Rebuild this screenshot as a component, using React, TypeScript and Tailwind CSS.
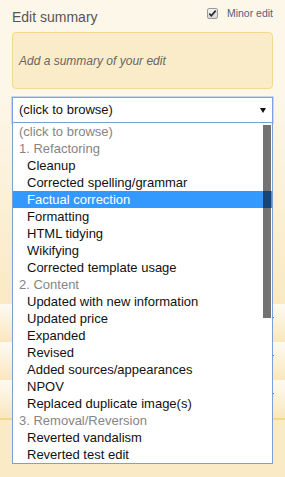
import { Fragment } from "react";

type Row = { label: string; group?: boolean; selected?: boolean };

const rows: Row[] = [
  { label: "(click to browse)", group: true },
  { label: "1. Refactoring", group: true },
  { label: "Cleanup" },
  { label: "Corrected spelling/grammar" },
  { label: "Factual correction", selected: true },
  { label: "Formatting" },
  { label: "HTML tidying" },
  { label: "Wikifying" },
  { label: "Corrected template usage" },
  { label: "2. Content", group: true },
  { label: "Updated with new information" },
  { label: "Updated price" },
  { label: "Expanded" },
  { label: "Revised" },
  { label: "Added sources/appearances" },
  { label: "NPOV" },
  { label: "Replaced duplicate image(s)" },
  { label: "3. Removal/Reversion", group: true },
  { label: "Reverted vandalism" },
  { label: "Reverted test edit" },
];

const App = () => {
  return (
    <div className="flex h-[477px] w-[285px] flex-col overflow-hidden font-['Liberation_Sans',Arial,sans-serif]">
      <div className="h-[304px] shrink-0 bg-gradient-to-b from-[#fdf7ea] from-30% to-[#fae9c3] px-3 pt-[5px]">
        <div className="flex items-start justify-between">
          <span className="mt-[4px] text-[14px] leading-4 text-[#555]">
            Edit summary
          </span>
          <label className="mt-[2px] flex items-center gap-[9px]">
            <span className="flex h-[11px] w-[11px] items-center justify-center rounded-[2px] border border-[#9a9a9a] bg-gradient-to-b from-[#f2f2f2] to-[#d8d8d8]">
              <svg viewBox="0 0 10 10" className="h-[9px] w-[9px]">
                <path
                  d="M1.5 5.2l2.2 2.3L8.6 1.8"
                  fill="none"
                  stroke="#2b2b2b"
                  strokeWidth="1.9"
                />
              </svg>
            </span>
            <span className="text-[10.5px] leading-3 text-[#58617a]">
              Minor edit
            </span>
          </label>
        </div>

        <div className="mt-[7px] flex h-[57px] items-center rounded-[4px] border border-[#f4d88f] bg-[#fbecc9] pl-[6px]">
          <span className="text-[12px] italic text-[#666]">
            Add a summary of your edit
          </span>
        </div>

        <div className="relative mt-[8px]">
          <div className="flex h-[26px] items-center justify-between border border-[#7ba1e4] bg-white pl-[6px] pr-[6px] shadow-[0_0_0_1px_#c8d8f4]">
            <span className="text-[13px] text-[#111]">(click to browse)</span>
            <svg viewBox="0 0 6 5" className="h-[5px] w-[6px]">
              <path d="M0 0h6L3 5z" fill="#111" />
            </svg>
          </div>

          <div className="absolute left-0 right-0 top-[25px] z-10 border border-[#7c9fd8] bg-white">
            {rows.map((r) => (
              <Fragment key={r.label}>
                <div
                  className={
                    r.selected
                      ? "h-[17px] bg-[#3399ff] pl-[14px] text-[13px] leading-[17px] text-white"
                      : r.group
                        ? "h-[17px] pl-[6px] text-[13px] leading-[17px] text-[#858585]"
                        : "h-[17px] pl-[14px] text-[13px] leading-[17px] text-[#111]"
                  }
                >
                  {r.label}
                </div>
              </Fragment>
            ))}
            <div className="absolute right-[1px] top-[2px] h-[193px] w-[8px] bg-black/55" />
          </div>
        </div>
      </div>

      {[0, 1, 2].map((i) => (
        <div
          key={i}
          className="flex h-[38px] shrink-0 items-start justify-end bg-gradient-to-b from-[#fefaf2] to-[#fae7bd] pr-[11px] pt-[13px]"
        >
          <svg viewBox="0 0 4 3" className="h-[3px] w-[4px]">
            <path d="M0 0h4L2 3z" fill="#3a3a3a" />
          </svg>
        </div>
      ))}
      <div className="h-[2px] shrink-0 bg-[#f5d68b]" />
      <div className="flex-1 bg-[#fbeac6]" />
    </div>
  );
};

export default App;
